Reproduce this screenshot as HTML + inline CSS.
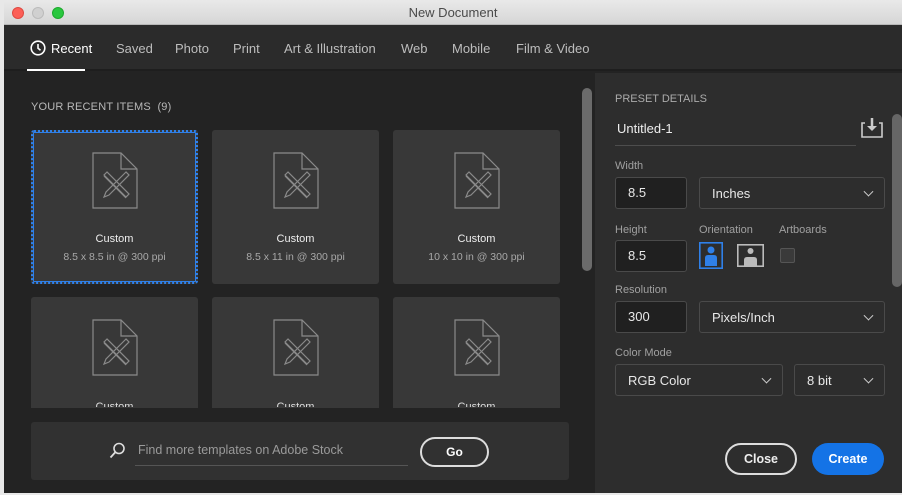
<!DOCTYPE html>
<html><head><style>
*{margin:0;padding:0;box-sizing:border-box}
body{width:902px;height:495px;overflow:hidden;background:#e8e8e8;font-family:"Liberation Sans",sans-serif;position:relative}
.win{position:absolute;left:4px;top:0;width:898px;height:493px;background:#232323;overflow:hidden}
.title{position:absolute;left:0;top:0;width:898px;height:25px;background:linear-gradient(#e9e9e9,#d6d6d6);border-bottom:1px solid #b8b8b8;text-align:center;font-size:13px;line-height:26px;color:#4a4a4a}
.dot{position:absolute;top:7px;width:12px;height:12px;border-radius:50%}
.tabs{position:absolute;top:25px;left:0;width:898px;height:46px;background:#2b2b2b;border-bottom:2px solid #1e1e1e}
.tab{position:absolute;top:16px;font-size:13px;color:#bdbdbd}
.abs{position:absolute}
.card{position:absolute;background:#383838;border-radius:3px;width:167px}
.right{position:absolute;left:591px;top:73px;width:307px;height:420px;background:#2d2d2d}
.lbl{position:absolute;font-size:11px;color:#a0a0a0}
.box{position:absolute;border:1px solid #4a4a4a;border-radius:3px;font-size:13px;color:#e8e8e8;padding-left:12px}
.chev{position:absolute;right:12px;top:50%;width:7px;height:7px;border-right:1.5px solid #ccc;border-bottom:1.5px solid #ccc;transform:translateY(-70%) rotate(45deg)}
</style></head><body>
<div class="win">
<div class="title">New Document
<div class="dot" style="left:8px;background:#fc5f57;border:1px solid #de4a42"></div>
<div class="dot" style="left:28px;background:#d0d0d0;border:1px solid #bbb"></div>
<div class="dot" style="left:48px;background:#2ac73f;border:1px solid #1ea92e"></div>
</div>
<div class="tabs">
<svg class="abs" style="left:26px;top:15px" width="16" height="16" viewBox="0 0 16 16"><circle cx="8" cy="8" r="6.8" fill="none" stroke="#fff" stroke-width="1.6"/><path d="M8 4v4.3l2.5 2" fill="none" stroke="#fff" stroke-width="1.6"/></svg>
<div class="tab" style="left:47px;color:#fff">Recent</div>
<div class="abs" style="left:23px;top:44px;width:58px;height:2px;background:#fff"></div>
<div class="tab" style="left:112px">Saved</div>
<div class="tab" style="left:171px">Photo</div>
<div class="tab" style="left:229px">Print</div>
<div class="tab" style="left:280px">Art &amp; Illustration</div>
<div class="tab" style="left:397px">Web</div>
<div class="tab" style="left:448px">Mobile</div>
<div class="tab" style="left:512px">Film &amp; Video</div>
</div>
<div class="abs" style="left:27px;top:101px;font-size:11px;color:#b8b8b8;letter-spacing:.2px">YOUR RECENT ITEMS&nbsp; (9)</div>
<div class="abs" style="left:578px;top:88px;width:10px;height:183px;border-radius:5px;background:#6b6b6b"></div>

<div class="abs" style="left:23px;top:73px;width:550px;height:335px;overflow:hidden">
<div class="card" style="left:4px;top:57px;height:154px;border:2px dotted #2f80e8;outline:1px solid #2f80e8;outline-offset:-3px"></div>
<div class="card" style="left:185px;top:57px;height:154px"></div>
<div class="card" style="left:366px;top:57px;height:154px"></div>
<div class="card" style="left:4px;top:224px;height:154px"></div>
<div class="card" style="left:185px;top:224px;height:154px"></div>
<div class="card" style="left:366px;top:224px;height:154px"></div>
</div>
<svg width="0" height="0" style="position:absolute"><defs><g id="ic" fill="none" stroke="#8a8a8a" stroke-width="1.2"><path d="M1 1h28l16 16v39H1z"/><path d="M29 1v16h16"/><path d="M12 24l22 22M15 20l-3 3 22 22 3-3z M34 20l-20 20-2 5 5-2 20-20z"/></g></defs></svg>
<svg class="abs" style="left:88px;top:152px" width="48" height="58"><use href="#ic"/></svg>
<svg class="abs" style="left:269px;top:152px" width="48" height="58"><use href="#ic"/></svg>
<svg class="abs" style="left:450px;top:152px" width="48" height="58"><use href="#ic"/></svg>
<svg class="abs" style="left:88px;top:319px" width="48" height="58"><use href="#ic"/></svg>
<svg class="abs" style="left:269px;top:319px" width="48" height="58"><use href="#ic"/></svg>
<svg class="abs" style="left:450px;top:319px" width="48" height="58"><use href="#ic"/></svg>
<div class="abs" style="left:27px;top:233px;width:167px;text-align:center;font-size:11px;color:#eee">Custom</div>
<div class="abs" style="left:27px;top:251px;width:167px;text-align:center;font-size:10.5px;color:#a8a8a8">8.5 x 8.5 in @ 300 ppi</div>
<div class="abs" style="left:208px;top:233px;width:167px;text-align:center;font-size:11px;color:#eee">Custom</div>
<div class="abs" style="left:208px;top:251px;width:167px;text-align:center;font-size:10.5px;color:#a8a8a8">8.5 x 11 in @ 300 ppi</div>
<div class="abs" style="left:389px;top:233px;width:167px;text-align:center;font-size:11px;color:#eee">Custom</div>
<div class="abs" style="left:389px;top:251px;width:167px;text-align:center;font-size:10.5px;color:#a8a8a8">10 x 10 in @ 300 ppi</div>
<div class="abs" style="left:27px;top:400px;width:540px;height:7px;overflow:hidden">
<div class="abs" style="left:0;top:1px;width:167px;text-align:center;font-size:11px;color:#ddd">Custom</div>
<div class="abs" style="left:181px;top:1px;width:167px;text-align:center;font-size:11px;color:#ddd">Custom</div>
<div class="abs" style="left:362px;top:1px;width:167px;text-align:center;font-size:11px;color:#ddd">Custom</div>
</div>

<div class="abs" style="left:27px;top:422px;width:538px;height:58px;background:#313131;border-radius:3px"></div>
<svg class="abs" style="left:105px;top:442px" width="16" height="17"><circle cx="10" cy="6.5" r="5" fill="none" stroke="#ddd" stroke-width="1.6"/><path d="M6.5 10L1.5 15.5" stroke="#ddd" stroke-width="1.8"/></svg>
<div class="abs" style="left:134px;top:443px;font-size:12.5px;color:#9a9a9a">Find more templates on Adobe Stock</div>
<div class="abs" style="left:131px;top:465px;width:273px;height:1px;background:#555"></div>
<div class="abs" style="left:416px;top:437px;width:69px;height:30px;border:2px solid #ddd;border-radius:15px;text-align:center;font-size:12px;font-weight:bold;color:#fff;line-height:26px">Go</div>

<div class="right">
<div class="lbl" style="left:20px;top:20px;color:#ababab">PRESET DETAILS</div>
<div class="abs" style="left:22px;top:48px;font-size:13px;color:#eee">Untitled-1</div>
<div class="abs" style="left:20px;top:72px;width:241px;height:1px;background:#4d4d4d"></div>
<svg class="abs" style="left:266px;top:44px" width="22" height="22"><path d="M4 6H1v14h20V6h-3" fill="none" stroke="#ccc" stroke-width="1.6"/><path d="M11 1v10" stroke="#ccc" stroke-width="2.5"/><path d="M6 9h10l-5 5z" fill="#ccc"/></svg>
<div class="abs" style="left:297px;top:41px;width:10px;height:173px;border-radius:5px;background:#666"></div>
<div class="lbl" style="left:20px;top:87px">Width</div>
<div class="box" style="left:20px;top:104px;width:72px;height:32px;background:#202020;line-height:30px">8.5</div>
<div class="box" style="left:104px;top:104px;width:186px;height:32px;line-height:32px;padding-left:12px">Inches<span class="chev"></span></div>
<div class="lbl" style="left:20px;top:151px">Height</div>
<div class="lbl" style="left:104px;top:151px">Orientation</div>
<div class="lbl" style="left:184px;top:151px">Artboards</div>
<div class="box" style="left:20px;top:167px;width:72px;height:32px;background:#202020;line-height:30px">8.5</div>
<svg class="abs" style="left:104px;top:169px" width="24" height="27"><rect x="0.8" y="0.8" width="22.4" height="25.4" fill="none" stroke="#2f80e8" stroke-width="1.6"/><circle cx="12" cy="8" r="3.5" fill="#2f80e8"/><path d="M6 24v-8q0-3 3-3h6q3 0 3 3v8z" fill="#2f80e8"/></svg>
<svg class="abs" style="left:142px;top:171px" width="27" height="23"><rect x="0.8" y="0.8" width="25.4" height="21.4" fill="none" stroke="#bbb" stroke-width="1.6"/><circle cx="13.5" cy="7" r="3" fill="#bbb"/><path d="M7 22v-6q0-3 3-3h7q3 0 3 3v6z" fill="#bbb"/></svg>
<div class="abs" style="left:185px;top:175px;width:15px;height:15px;border:1px solid #555;background:#3a3a3a;border-radius:2px"></div>
<div class="lbl" style="left:20px;top:211px">Resolution</div>
<div class="box" style="left:20px;top:228px;width:72px;height:32px;background:#202020;line-height:30px">300</div>
<div class="box" style="left:104px;top:228px;width:186px;height:32px;line-height:32px">Pixels/Inch<span class="chev"></span></div>
<div class="lbl" style="left:20px;top:274px">Color Mode</div>
<div class="box" style="left:20px;top:291px;width:168px;height:32px;line-height:32px">RGB Color<span class="chev"></span></div>
<div class="box" style="left:199px;top:291px;width:91px;height:32px;line-height:32px">8 bit<span class="chev"></span></div>
<div class="abs" style="left:130px;top:370px;width:72px;height:32px;border:2px solid #ddd;border-radius:16px;text-align:center;line-height:28px;font-size:12.5px;font-weight:bold;color:#eee">Close</div>
<div class="abs" style="left:217px;top:370px;width:72px;height:32px;background:#1473e6;border-radius:16px;text-align:center;line-height:32px;font-size:12.5px;font-weight:bold;color:#fff">Create</div>
</div>
</div>
</body></html>
